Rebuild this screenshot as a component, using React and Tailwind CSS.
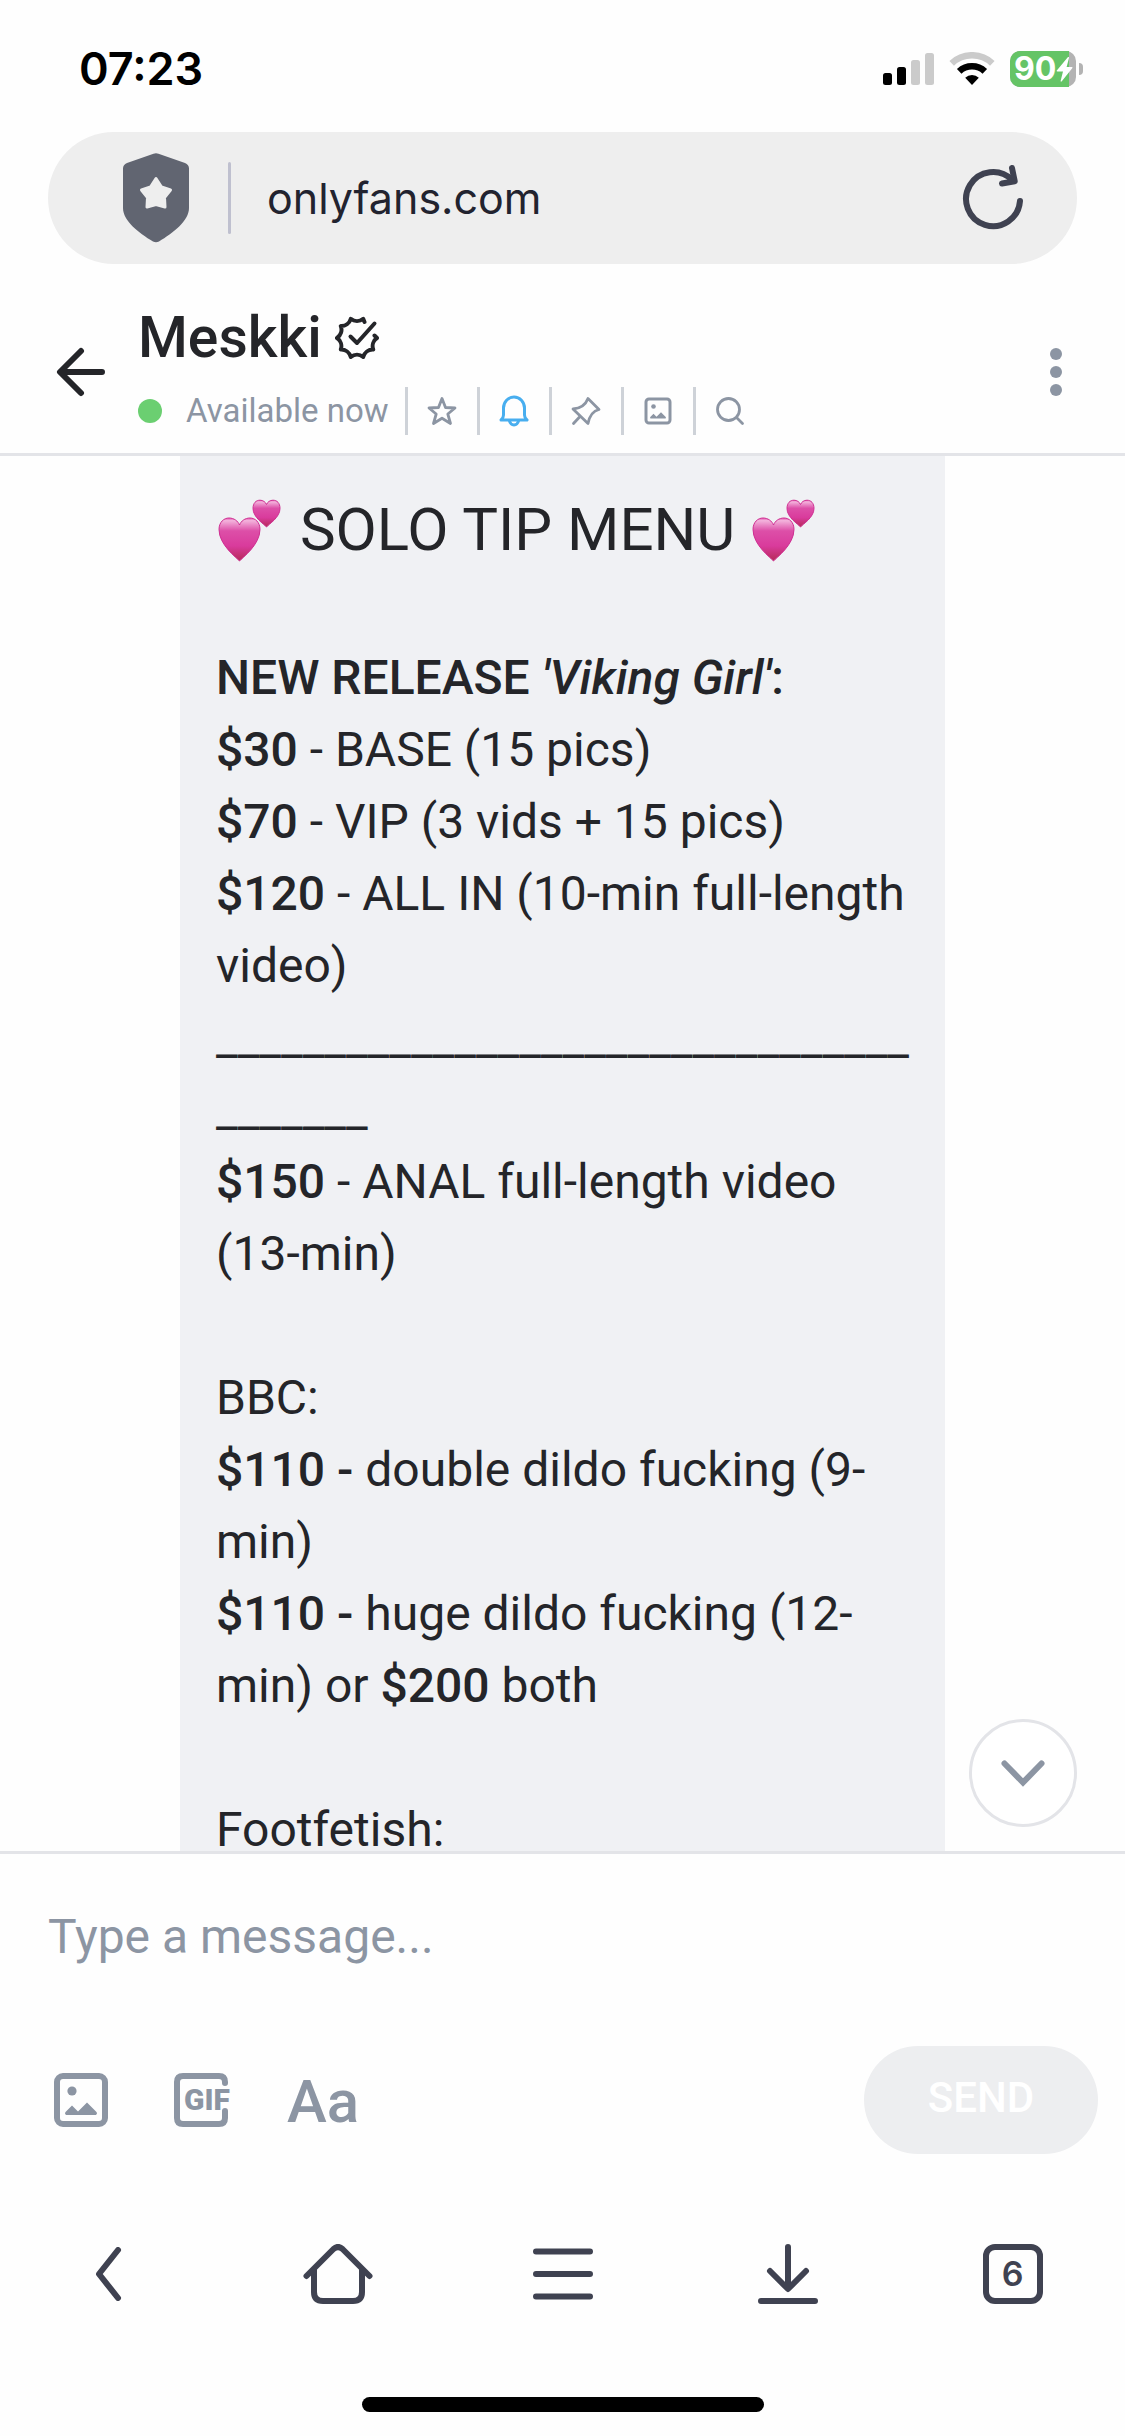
import React from 'react';

const SignalIcon = () => (
    <svg width="51" height="33" viewBox="0 0 51 33" aria-hidden="true">
        <rect x="0" y="21" width="9" height="12" rx="2.5" fill="#000" />
        <rect x="14" y="15" width="9" height="18" rx="2.5" fill="#000" />
        <rect x="28" y="8" width="9" height="25" rx="2.5" fill="#cbcbcb" />
        <rect x="42" y="1" width="9" height="32" rx="2.5" fill="#cbcbcb" />
    </svg>
);

const WifiIcon = () => (
    <svg width="46" height="33" viewBox="0 0 46 33" fill="none" aria-hidden="true">
        <path d="M2.7 11.3a29.7 29.7 0 0 1 40.6 0" stroke="#cbcbcb" strokeWidth="6.6" />
        <path d="M10.2 19.3a18.7 18.7 0 0 1 25.6 0" stroke="#000" strokeWidth="6.6" />
        <path d="M23 33l-6.8-7.3a10 10 0 0 1 13.6 0z" fill="#000" />
    </svg>
);

const Battery = () => (
    <div className="flex items-center gap-[3px]">
        <div className="relative flex h-9 w-[66px] items-center rounded-[10px] bg-[#b3b3b3]">
            <div className="absolute inset-y-0 left-0 w-[59px] rounded-l-[10px] bg-[#65c466]" />
            <span className="relative pl-1 text-[32px] leading-9 font-bold text-white">90</span>
            <svg className="absolute top-[6px] right-[3px]" width="17" height="25" viewBox="0 0 17 25" aria-hidden="true">
                <path d="M12 0L0.8 13.5q-.6 1 .6 1H7L4.6 24q.2 1.2 1.2.2L16.4 11q.6-1-.6-1H10.6L13 1Q13-.6 12 0z" fill="#fff" />
            </svg>
        </div>
        <div className="h-3 w-1 rounded-r-full bg-[#b3b3b3]" />
    </div>
);

const ShieldIcon = () => (
    <svg width="66" height="90" viewBox="0 0 66 90" aria-hidden="true">
        <path
            d="M30.5.7Q33-.3 35.5.7L62 10q4 1.5 4 5.5V55c0 13-16 25-30 33.5q-3 1.5-6 0C16 80 0 68 0 55V15.5Q0 11.5 4 10z"
            fill="#616571"
        />
        <path
            d="M33 25.500L38.5 34L47.500 37L41.5 44.5L42 54L33 51.5L24 54L24.5 44.500L18.5 37L27.5 34z"
            fill="#eee"
            stroke="#eee"
            strokeWidth="3"
            strokeLinejoin="round"
        />
    </svg>
);

const ReloadIcon = () => (
    <svg width="68" height="70" viewBox="0 0 68 70" fill="none" stroke="#3f4251" strokeWidth="6" strokeLinecap="round" strokeLinejoin="round" aria-hidden="true">
        <path d="M61 40A27 27 0 1 1 53 18.8" />
        <path d="M53 7l2.7 13.2L43 22.5" />
    </svg>
);

const BackArrowIcon = () => (
    <svg width="50" height="50" viewBox="0 0 50 50" fill="none" stroke="#242529" strokeWidth="6" strokeLinecap="round" strokeLinejoin="round" aria-hidden="true">
        <path d="M25 4L4 25l21 21M5 25h41" />
    </svg>
);

const VerifiedIcon = () => (
    <svg width="44" height="44" viewBox="0 0 44 44" fill="none" stroke="#242529" strokeWidth="4" strokeLinecap="round" strokeLinejoin="round" aria-label="Verified">
        <path d="M39.5 19.5L42 22A10 10 0 0 0 38.2 33.5A10 10 0 0 0 28.2 41A10 10 0 0 0 15.8 41A10 10 0 0 0 5.8 33.5A10 10 0 0 0 2 22A10 10 0 0 0 5.8 10A10 10 0 0 0 15.8 2.8A10 10 0 0 0 28.2 2.8L29.5 6" />
        <path d="M15.5 20.5l6.5 6.5L39.5 7.5" />
    </svg>
);

const StarIcon = () => (
    <svg width="30" height="30" viewBox="0 0 30 30" fill="none" stroke="#8c95a3" strokeWidth="2.8" strokeLinejoin="round" aria-hidden="true">
        <path d="M15 2.5L18.5 11.5L28 12L20.8 18L23.5 27.5L15 22.2L6.5 27.5L9.2 18L2 12L11.5 11.5z" />
    </svg>
);

const BellIcon = () => (
    <svg width="30" height="32" viewBox="0 0 30 32" fill="none" stroke="#48aeef" strokeWidth="3" strokeLinecap="round" strokeLinejoin="round" aria-hidden="true">
        <path d="M4.5 20V13a10.5 11 0 0 1 21 0v7q0 3 2.5 5H2q2.5-2 2.5-5z" />
        <path d="M10.5 26q1 4 4.5 4t4.5-4" />
    </svg>
);

const PinIcon = () => (
    <svg width="30" height="30" viewBox="0 0 30 30" fill="none" stroke="#8c95a3" strokeWidth="2.8" strokeLinecap="round" strokeLinejoin="round" aria-hidden="true">
        <path d="M17 2.5L28 13.5C21.5 15 18.5 20 17 27.5L2 13C9 12.5 14.5 9 17 2.5zM9 20.5L2.5 27.5" />
    </svg>
);

const ImageIcon = ({ size = 30 }) => (
    <svg width={size} height={size} viewBox="0 0 30 30" fill="none" aria-hidden="true">
        <rect x="3" y="3" width="24" height="24" rx="3" stroke="#8c95a3" strokeWidth="3" />
        <circle cx="10.5" cy="10.5" r="2.3" fill="#8c95a3" />
        <path d="M7.5 22.5q-1-.8 0-1.7L10.5 17.8L13.5 20.8L18 16.3L22.5 20.8q1 .9 0 1.7z" fill="#8c95a3" />
    </svg>
);

const SearchIcon = () => (
    <svg width="30" height="30" viewBox="0 0 30 30" fill="none" stroke="#8c95a3" strokeWidth="2.8" strokeLinecap="round" aria-hidden="true">
        <circle cx="13.5" cy="13.5" r="11" />
        <path d="M22 22l5.5 5.5" />
    </svg>
);

const HeartsEmoji = () => (
    <svg className="inline align-[-12px]" width="69" height="64" viewBox="0 0 69 64" role="img" aria-label="Two hearts">
        <defs>
            <linearGradient id="heart" x1="0" y1="0" x2="0" y2="1">
                <stop offset="0" stopColor="#e84fae" />
                <stop offset="0.06" stopColor="#f3b3dc" />
                <stop offset="0.3" stopColor="#dd4fa8" />
                <stop offset="0.65" stopColor="#d93b9c" />
                <stop offset="1" stopColor="#b52a56" />
            </linearGradient>
        </defs>
        <path
            d="M23.5 63C21 60 3 47 3 31.5C3 24 8 20 13 20c5 0 9 3 10.5 7C25 23 29 20 34 20c5 0 10 4 10 11.5C44 47 26 60 23.5 63z"
            fill="url(#heart)"
            stroke="#cf2f92"
            strokeWidth="1"
        />
        <path
            d="M50.5 29C48 26 37 19.5 37 10.5C37 5 40 2.2 44 2.2c3 0 5.5 1.8 6.5 4.3c1-2.5 3.5-4.3 6.5-4.3c4 0 7 2.8 7 8.3C64 19.5 53 26 50.5 29z"
            fill="url(#heart)"
            stroke="#cf2f92"
            strokeWidth="1"
        />
    </svg>
);

const navItems = [
    {
        label: 'Back',
        icon: (
            <svg width="36" height="54" viewBox="0 0 36 54" aria-hidden="true">
                <path d="M23 3L4 27l19 24" />
            </svg>
        ),
    },
    {
        label: 'Home',
        icon: (
            <svg width="70" height="60" viewBox="0 0 70 60" aria-hidden="true">
                <path d="M3.5 32L30.5 5q4.5-4 9 0L66.5 32M11 26v22q0 9 9 9h30q9 0 9-9V26" />
            </svg>
        ),
    },
    {
        label: 'Menu',
        icon: (
            <svg width="60" height="52" viewBox="0 0 60 52" aria-hidden="true">
                <path d="M3 3.5h54M3 26h54M3 48.5h54" />
            </svg>
        ),
    },
    {
        label: 'Downloads',
        icon: (
            <svg width="60" height="60" viewBox="0 0 60 60" aria-hidden="true">
                <path d="M30 3v41M12 27l18 18l18-18M3 57h54" />
            </svg>
        ),
    },
];

const tools = [
    { label: 'Favorite', Icon: StarIcon },
    { label: 'Notifications', Icon: BellIcon },
    { label: 'Pinned', Icon: PinIcon },
    { label: 'Gallery', Icon: ImageIcon },
    { label: 'Search', Icon: SearchIcon },
];

const StatusBar = () => (
    <div className="flex h-[132px] shrink-0 items-center justify-between pt-[5px] pr-[42px] pl-[79px] font-[Inter,sans-serif]">
        <span className="text-[45px] leading-none font-semibold text-black">07:23</span>
        <div className="flex items-center gap-[15px]">
            <SignalIcon />
            <WifiIcon />
            <Battery />
        </div>
    </div>
);

const AddressBar = () => (
    <div className="mx-12 flex h-[132px] shrink-0 items-center rounded-full bg-[#eee] pr-[50px] pl-[75px]">
        <ShieldIcon />
        <div className="mr-9 ml-[39px] h-[72px] w-[3px] rounded-full bg-[#bfc0cf]" />
        <span className="flex-1 font-[Inter,sans-serif] text-[43px] text-[#22232f]">onlyfans.com</span>
        <button type="button" aria-label="Reload" className="pb-1">
            <ReloadIcon />
        </button>
    </div>
);

const ChatHeader = () => (
    <header className="flex shrink-0 items-center border-b-3 border-[#e3e4e8] pt-11 pr-[63px] pb-[18px] pl-14">
        <button type="button" aria-label="Back to chats">
            <BackArrowIcon />
        </button>
        <div className="ml-8 flex-1">
            <div className="flex items-center gap-[13px]">
                <h1 className="text-[57px] leading-[60px] font-medium">Meskki</h1>
                <VerifiedIcon />
            </div>
            <div className="mt-[19px] flex h-12 items-center">
                <span className="size-6 rounded-full bg-[#6bcf71]" />
                <span className="mr-4 ml-6 text-[33px] text-[#8c95a3]">Available now</span>
                {tools.map(({ label, Icon }) => (
                    <button
                        key={label}
                        type="button"
                        aria-label={label}
                        className="flex h-12 w-[72px] items-center justify-center border-l-3 border-[#ced2d8]"
                    >
                        <Icon />
                    </button>
                ))}
            </div>
        </div>
        <button type="button" aria-label="More" className="flex flex-col gap-[6px]">
            <span className="size-3 rounded-full bg-[#8c95a3]" />
            <span className="size-3 rounded-full bg-[#8c95a3]" />
            <span className="size-3 rounded-full bg-[#8c95a3]" />
        </button>
    </header>
);

const Price = ({ children }) => <strong className="font-medium">{children}</strong>;

const Message = () => (
    <div className="mx-auto w-[68%] bg-[#f0f1f4] pt-[38px] pr-8 pl-9 text-5xl leading-[72px] wrap-break-word">
        <p>
            <span className="text-6xl leading-[72px]">
                <HeartsEmoji /> SOLO TIP MENU <HeartsEmoji />
            </span>
        </p>
        <br />
        <p className="font-medium">
            NEW RELEASE <em>'Viking Girl'</em>:
        </p>
        <p><Price>$30</Price> - BASE (15 pics)</p>
        <p><Price>$70</Price> - VIP (3 vids + 15 pics)</p>
        <p><Price>$120</Price> - ALL IN (10-min full-length video)</p>
        <p>_______________________________________</p>
        <p><Price>$150</Price> - ANAL full-length video (13-min)</p>
        <br />
        <p>BBC:</p>
        <p><Price>$110 -</Price> double dildo fucking (9-min)</p>
        <p><Price>$110 -</Price> huge dildo fucking (12-min) or <Price>$200</Price> both</p>
        <br />
        <p>Footfetish:</p>
    </div>
);

const Composer = () => (
    <form className="shrink-0 border-t-3 border-[#e3e4e8] pt-[46px]" onSubmit={(e) => e.preventDefault()}>
        <input
            type="text"
            aria-label="Message"
            placeholder="Type a message..."
            className="block h-[72px] w-full px-12 text-5xl outline-none placeholder:text-[#8c95a3]"
        />
        <div className="mt-[74px] flex h-[108px] items-center pr-[27px] pl-[51px] text-[#8c95a3]">
            <button type="button" aria-label="Add image">
                <ImageIcon size={60} />
            </button>
            <button type="button" className="relative ml-[60px] flex size-[60px] items-center justify-center">
                <svg className="absolute inset-0" width="60" height="60" viewBox="0 0 60 60" fill="none" stroke="#8c95a3" strokeWidth="6" strokeLinecap="round" aria-hidden="true">
                    <path d="M54 13v-1q0-6-6-6H12q-6 0-6 6v36q0 6 6 6h36q6 0 6-6v-7" />
                </svg>
                <span className="relative pl-3 text-[30px] leading-none font-black">GIF</span>
            </button>
            <button type="button" aria-label="Text formatting" className="ml-14 pt-1 text-[60px] leading-[60px] font-medium">
                Aa
            </button>
            <button
                type="submit"
                className="ml-auto h-[108px] w-[234px] rounded-full bg-[#edeef0] pb-[5px] text-[42px] font-medium text-white"
            >
                SEND
            </button>
        </div>
    </form>
);

const BrowserNav = () => (
    <nav className="grid h-[243px] shrink-0 grid-cols-5 items-center fill-none stroke-[#3f4251] stroke-6 pb-1 [stroke-linecap:round] [stroke-linejoin:round]">
        {navItems.map(({ label, icon }) => (
            <button key={label} type="button" aria-label={label} className="flex justify-center">
                {icon}
            </button>
        ))}
        <button type="button" className="flex justify-center" aria-label="6 open tabs">
            <span className="flex size-[60px] items-center justify-center rounded-xl border-6 border-[#3f4251] font-[Inter,sans-serif] text-[34px] leading-none font-semibold text-[#3f4251]">
                6
            </span>
        </button>
    </nav>
);

const App = () => (
    <div className="flex h-screen flex-col overflow-hidden bg-[#fefefe] font-[Roboto,sans-serif] text-[#242529]">
        <StatusBar />
        <AddressBar />
        <ChatHeader />
        <main className="relative min-h-0 flex-1">
            <div className="h-full overflow-hidden">
                <Message />
            </div>
            <button
                type="button"
                aria-label="Scroll to latest"
                className="absolute right-12 bottom-6 flex size-[108px] items-center justify-center rounded-full border-3 border-[#e3e4e8] bg-white"
            >
                <svg width="44" height="27" viewBox="0 0 44 27" fill="none" stroke="#8c95a3" strokeWidth="6" strokeLinecap="round" aria-hidden="true">
                    <path d="M3.5 3.5L22 22.500L40.5 3.5" />
                </svg>
            </button>
        </main>
        <Composer />
        <BrowserNav />
        <div className="mx-auto mb-6 h-[15px] w-[402px] shrink-0 rounded-full bg-black" />
    </div>
);

export default App;
